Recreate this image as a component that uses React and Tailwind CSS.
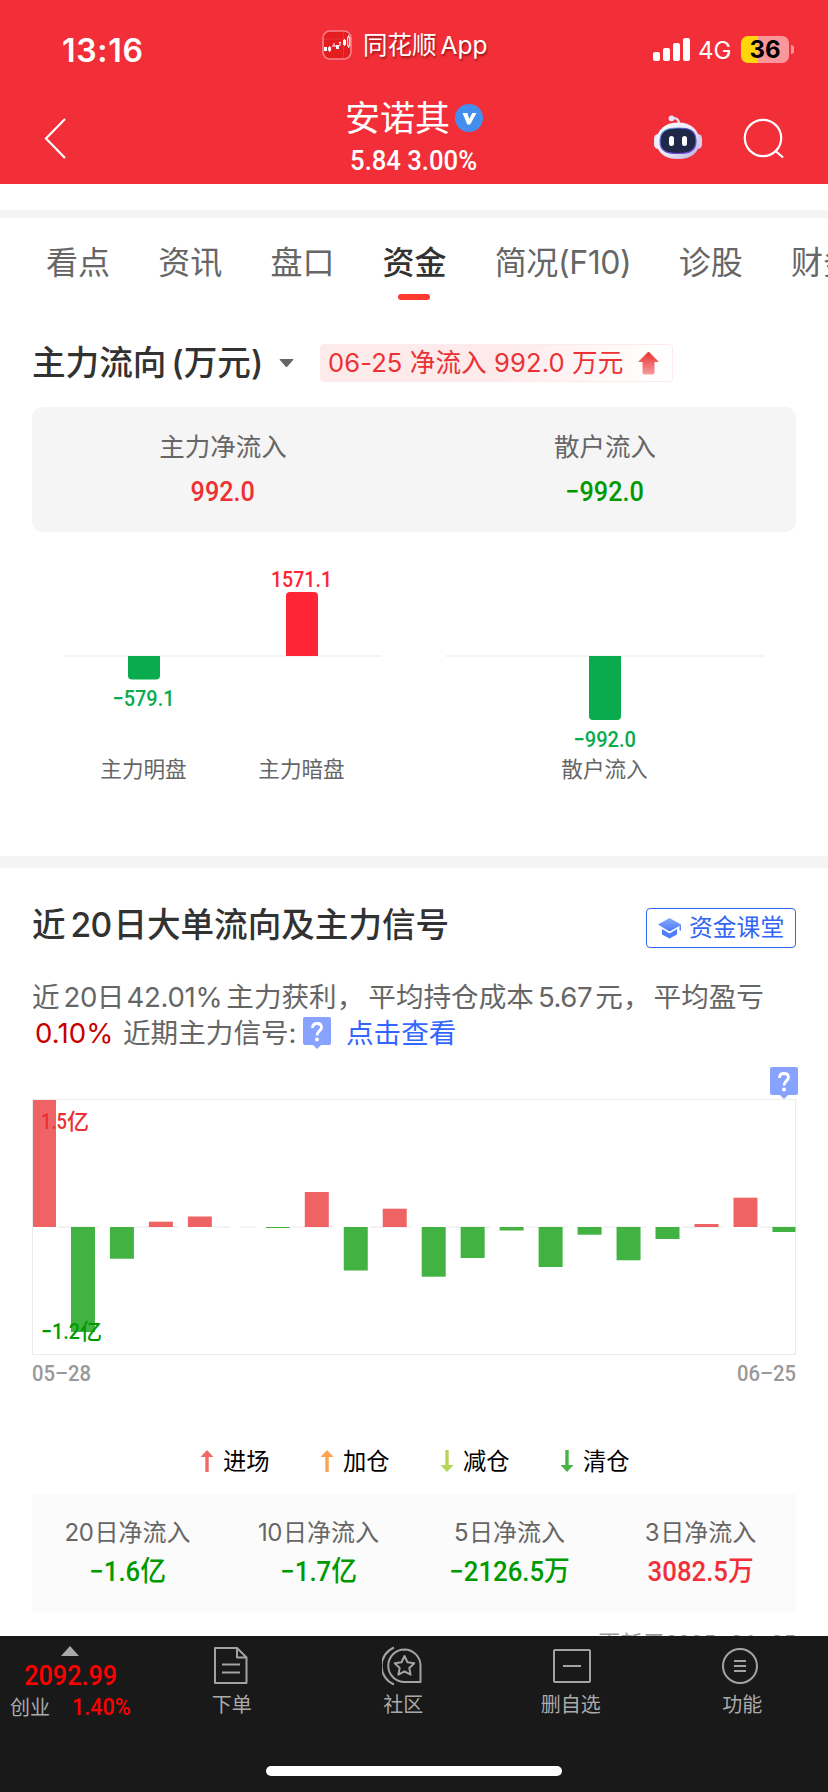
import React from "react";

function StatusBar() {
  return (
    <div className="flex h-[92px] w-full pt-[28px] text-white">
      <div className="w-[322px] pl-[62px] text-[32px] leading-[45px] font-semibold tracking-[0.7px]">13:16</div>
      <div className="flex h-[36px] w-[331px] items-start">
        <svg width="30" height="30" viewBox="0 0 30 30" className="mt-[2px] shrink-0">
          <rect x="1" y="1" width="28" height="28" rx="7" fill="#e41d20" stroke="#f5848a" strokeWidth="1.6" />
          <path d="M2 9H28M21.500 2V28" stroke="#f04a4e" strokeWidth=".5" />
          <path d="M2 17h3v4h-3zM14 15h3v4h-3zM21 10h3v5h-3z" fill="#fff" />
          <path d="M6.600 17.500h2v3h-2zM7.600 16v6M10 16h4M12 13v3M17 12.500h2M18 12v4M22.500 9v7M25.700 7h2v9h-2zM26.700 5v2M26.700 16v2" fill="none" stroke="#fff" strokeWidth="1" />
        </svg>
        <span className="ml-[11px] text-[24.500px] leading-[35px] whitespace-nowrap [text-shadow:1px_2px_2px_rgba(90,0,0,0.55)]">
          同花顺<span className="ml-[4px]">App</span>
        </span>
      </div>
      <svg width="38" height="24" viewBox="0 0 38 24" className="mt-[10px] shrink-0" fill="#fff">
        <rect x="0" y="14" width="7" height="9" rx="2" />
        <rect x="10" y="10" width="7" height="13" rx="2" />
        <rect x="20" y="5" width="7" height="18" rx="2" />
        <rect x="30" y="0" width="7" height="23" rx="2" />
      </svg>
      <div className="ml-[7px] w-[43px] text-[24px] leading-[45px]">4G</div>
      <div className="mt-[8px] flex h-[27px] w-[48px] items-center justify-center rounded-[7px] bg-[linear-gradient(90deg,#ffd60a_35%,#f9979b_35%)] text-[24px] font-bold text-black">
        36
      </div>
      <div className="mt-[17px] ml-[2px] h-[9px] w-[3px] rounded-r-full bg-[#f9979b]" />
    </div>
  );
}

function Robot() {
  return (
    <svg width="48" height="46" viewBox="0 0 48 46">
      <defs>
        <linearGradient id="shell" x1="0" y1="0" x2="1" y2="1">
          <stop offset="0" stopColor="#ffffff" />
          <stop offset=".55" stopColor="#e9e7f8" />
          <stop offset="1" stopColor="#b3aedd" />
        </linearGradient>
        <linearGradient id="rim" x1="0" y1="0" x2="1" y2="1">
          <stop offset="0" stopColor="#6fd6f2" />
          <stop offset=".4" stopColor="#5a49c9" />
          <stop offset="1" stopColor="#7d4be0" />
        </linearGradient>
      </defs>
      <rect x="0" y="19" width="9" height="15" rx="4.500" fill="#e9e9fa" />
      <rect x="39" y="19" width="9" height="15" rx="4.500" fill="#d2cff0" />
      <path d="M17 3.500C22 2.500 25 4 25 9" fill="none" stroke="#dcdcf5" strokeWidth="2.200" />
      <circle cx="17.500" cy="3.300" r="2.900" fill="#e6e6fa" />
      <path d="M24 7.500C37 7.500 45.500 15 45.500 26.500C45.500 38 37 44 24 44S2.500 38 2.500 26.500C2.500 15 11 7.500 24 7.500Z" fill="url(#shell)" />
      <path d="M24 13C34 13 42 14.500 42 26C42 37 34 38.500 24 38.500S6 37 6 26C6 14.500 14 13 24 13Z" fill="#202849" stroke="url(#rim)" strokeWidth="1.200" />
      <rect x="15" y="21" width="5" height="10" rx="2.500" fill="#fff" />
      <rect x="28" y="21" width="5" height="10" rx="2.500" fill="#fff" />
    </svg>
  );
}

function TitleBar() {
  return (
    <div className="flex h-[92px] w-full text-white">
      <div className="w-[214px] pt-[25px] pl-[42px]">
        <svg width="26" height="42" viewBox="0 0 26 42" fill="none" stroke="#fff" strokeWidth="2.200">
          <path d="M23 2L4 21.500L23 41" />
        </svg>
      </div>
      <div className="flex w-[400px] flex-col items-center">
        <div className="mt-[4px] flex h-[44px] items-center">
          <span className="text-[35px] leading-[44px]">安诺其</span>
          <svg width="28" height="28" viewBox="0 0 28 28" className="ml-[5px]">
            <circle cx="14" cy="14" r="14" fill="#448fee" />
            <path d="M7.500 9H12.300L14.300 15L17.300 9H21.500L15.200 20.500H12.300Z" fill="#fff" />
          </svg>
        </div>
        <div className="scale-x-[0.9] font-['Roboto',sans-serif] text-[28.500px] leading-[42px] font-medium whitespace-pre">5.84 3.00%</div>
      </div>
      <div className="pt-[23px] pl-[40px]">
        <Robot />
      </div>
      <div className="pt-[26px] pl-[41px]">
        <svg width="42" height="42" viewBox="0 0 42 42" fill="none" stroke="#fff" strokeWidth="2.200">
          <circle cx="20" cy="20" r="18.200" />
          <path d="M32 32.500L40 39.500" />
        </svg>
      </div>
    </div>
  );
}

const tabs = [
  { name: "看点" },
  { name: "资讯" },
  { name: "盘口" },
  { name: "资金", active: true },
  { name: "简况(F10)", wide: true },
  { name: "诊股" },
  { name: "财务" },
];

function Tabs() {
  return (
    <nav className="flex h-[90px] w-full overflow-hidden pl-[46px] text-[32px] leading-[44px] text-[#666]">
      {tabs.map((t) => (
        <div key={t.name} className={`shrink-0 pt-[23px] whitespace-nowrap ${t.wide ? "w-[184px]" : "w-[112.200px]"}`}>
          <div className={t.active ? "font-medium text-[#323232]" : t.wide ? "tracking-[-0.4px]" : ""}>{t.name}</div>
          {t.active && <div className="mt-[9px] ml-[15px] h-[6px] w-[32px] rounded-full bg-[#ff3a2f]" />}
        </div>
      ))}
    </nav>
  );
}

function FlowHeading() {
  return (
    <div className="flex h-[38px] items-center pl-[32px]">
      <h2 className="w-[247px] text-[33.600px] leading-[44px] font-medium whitespace-nowrap text-[#323232]">
        主力流向<span className="ml-[5px]">(</span>万元)
      </h2>
      <svg width="15" height="9" viewBox="0 0 15 9" className="shrink-0">
        <path d="M1 .500H14L7.500 8Z" fill="#666" stroke="#666" strokeLinejoin="round" />
      </svg>
      <div className="ml-[26px] flex h-[38px] w-[353px] items-center rounded-[4px] border border-[#fdeaec] bg-[linear-gradient(100deg,#fdeaea_50%,#fffafa_85%,#ffffff)] pl-[7px] text-[#eb3134]">
        <span className="text-[25.600px] whitespace-pre tracking-[0.08px]">06-25 净流入 992.0 万元</span>
        <svg width="21" height="24" viewBox="0 0 21 24" className="ml-[15px]">
          <defs>
            <linearGradient id="up" x1="0" y1="0" x2="0" y2="1">
              <stop offset="0" stopColor="#e93030" />
              <stop offset="1" stopColor="#f79a9c" />
            </linearGradient>
          </defs>
          <path d="M10.500 1L20 10.500H16V22Q16 23 15 23H6Q5 23 5 22V10.500H1Z" fill="url(#up)" stroke="url(#up)" strokeLinejoin="round" />
        </svg>
      </div>
    </div>
  );
}

function SummaryCell({ label, value, color }) {
  return (
    <div className="flex w-1/2 flex-col items-center pt-[22px]">
      <div className="text-[25.500px] leading-[36px] text-[#666]">{label}</div>
      <div className={`mt-[9px] scale-x-[0.9] font-['Roboto',sans-serif] text-[28px] leading-[36px] font-medium ${color}`}>{value}</div>
    </div>
  );
}

const cjk = "Inter, 'Noto Sans CJK SC', sans-serif";
const din = "Roboto, 'Noto Sans CJK SC', sans-serif";

function Num({ x, y, w, fill, size = 22.5, children, anchor = "start" }) {
  return (
    <text x={x} y={y} fontFamily={din} fontSize={size} fontWeight="500" fill={fill} textAnchor={anchor} textLength={w} lengthAdjust="spacingAndGlyphs">
      {children}
    </text>
  );
}

function SplitChart() {
  return (
    <svg width="828" height="324" viewBox="0 532 828 324" className="block">
      <path d="M64 656H382M446 656H764" stroke="#f3f3f3" strokeWidth="2" />
      <path d="M128 656H160V675.500Q160 679.500 156 679.500H132Q128 679.500 128 675.500Z" fill="#09ab4c" />
      <path d="M286 656V596Q286 592 290 592H314Q318 592 318 596V656Z" fill="#ff2436" />
      <path d="M589 656H621V716Q621 720 617 720H593Q589 720 589 716Z" fill="#09ab4c" />
      <Num x={271} y={587} w={61} fill="#ff2436">1571.1</Num>
      <Num x={112.500} y={706} w={62} fill="#09ab4c">−579.1</Num>
      <Num x={573.500} y={747} w={62.500} fill="#09ab4c">−992.0</Num>
      <g fontFamily={cjk} fontSize="21.600" fill="#666" textAnchor="middle">
        <text x="143.500" y="777">主力明盘</text>
        <text x="301.500" y="777">主力暗盘</text>
        <text x="604.500" y="777">散户流入</text>
      </g>
    </svg>
  );
}

function Help({ className }) {
  return (
    <svg width="28" height="32" viewBox="0 0 28 32" className={className}>
      <path d="M2 0H26Q28 0 28 2V26Q28 28 26 28H18L14 32L10 28H2Q0 28 0 26V2Q0 0 2 0Z" fill="#88a2ff" />
      <path d="M9.500 11Q9.500 6.500 14 6.500T18.500 10.500C18.500 13.500 14 14 14 18.500" fill="none" stroke="#fff" strokeWidth="2.800" />
      <circle cx="14" cy="22.500" r="2" fill="#fff" />
    </svg>
  );
}

// End position of each bar on the chart's vertical axis; the zero line is at 1227.
const bars = [1100, 1332, 1258.7, 1221.7, 1216.5, 1227, 1228, 1192, 1270.5, 1208.7, 1276.7, 1258, 1230.5, 1267, 1234.7, 1260.3, 1239, 1224, 1197.7, 1232];

function SignalChart() {
  return (
    <svg width="828" height="292" viewBox="0 1099 828 292" className="block">
      <rect x="32.500" y="1099.500" width="763" height="255" fill="none" stroke="#ebebeb" />
      <path d="M58 1227H795" stroke="#f3f3f3" strokeWidth="2" strokeDasharray="42 36" />
      <rect x="230" y="1225" width="10" height="4" fill="#fff" />
      <Num x={41} y={1129} w={26} fill="#eb2f32">1.5</Num>
      <text x="67" y="1129" fontFamily={cjk} fontSize="22" fill="#eb2f32" fontWeight="500">亿</text>
      <Num x={41} y={1339} w={39} fill="#009a00">−1.2</Num>
      <text x="80" y="1339" fontFamily={cjk} fontSize="22" fill="#009a00" fontWeight="500">亿</text>
      {bars.map((end, i) => {
        const left = i === 0 ? 33 : 32 + i * 38.97;
        const width = i === 0 || i === 19 ? 23 : 24;
        return (
          <rect key={i} x={left} y={Math.min(end, 1227)} width={width} height={Math.abs(end - 1227)} fill={end < 1227 ? "#eb2f32" : "#039a03"} opacity=".75" />
        );
      })}
      <Num x={32} y={1381} w={59} fill="#999">05–28</Num>
      <Num x={737} y={1381} w={59} fill="#999">06–25</Num>
    </svg>
  );
}

const legend = [
  { name: "进场", color: "#f16a6a", up: true },
  { name: "加仓", color: "#ffa352", up: true },
  { name: "减仓", color: "#b5d658", up: false },
  { name: "清仓", color: "#48b246", up: false },
];

function Legend() {
  return (
    <div className="flex h-[103px] pt-[52px] pl-[200px]">
      {legend.map((l) => (
        <div key={l.name} className="flex h-[36px] w-[120px] items-center">
          <svg width="14" height="24" viewBox="0 0 14 24" className={l.up ? "" : "rotate-180"}>
            <path d="M7 1L13.500 8H8.700V23H5.300V8H.500Z" fill={l.color} />
          </svg>
          <span className="mt-[2px] ml-[9px] text-[23.300px] leading-[36px] text-black">{l.name}</span>
        </div>
      ))}
    </div>
  );
}

const totals = [
  { n: "20", num: "−1.6", unit: "亿", up: false },
  { n: "10", num: "−1.7", unit: "亿", up: false },
  { n: "5", num: "−2126.5", unit: "万", up: false },
  { n: "3", num: "3082.5", unit: "万", up: true },
];

function Totals() {
  return (
    <div className="mx-[32px] flex h-[118px] bg-[#fbfbfb]">
      {totals.map((t) => (
        <div key={t.n} className="flex w-1/4 flex-col items-center pt-[21px]">
          <div className="text-[24px] leading-[36px] whitespace-nowrap text-[#666]">
            <span className="mr-[1px] tracking-[-0.5px]">{t.n}</span>日净流入
          </div>
          <div className={`mt-[3px] scale-x-[0.92] font-['Roboto','Noto_Sans_CJK_SC',sans-serif] text-[28px] leading-[36px] font-medium whitespace-nowrap ${t.up ? "text-[#f22f38]" : "text-[#009a00]"}`}>
            {t.num}{t.unit}
          </div>
        </div>
      ))}
    </div>
  );
}

function SignalSection() {
  return (
    <section>
      <div className="flex h-[80px] justify-between pt-[40px] pr-[32px] pl-[32px]">
        <h2 className="-mt-[5px] text-[33.600px] leading-[44px] font-medium whitespace-nowrap text-[#323232]">
          近<span className="mr-[2px] ml-[5px] tracking-[-0.8px]">20</span>日大单流向及主力信号
        </h2>
        <div className="flex h-[40px] w-[150px] items-center rounded-[4px] border border-[#3366f6] pl-[11px] text-[#3366f6]">
          <svg width="24" height="22" viewBox="0 0 24 22">
            <defs>
              <linearGradient id="cap" x1="0" y1="0" x2="0" y2="1">
                <stop offset="0" stopColor="#8aacfb" />
                <stop offset="1" stopColor="#4878fa" />
              </linearGradient>
            </defs>
            <path d="M11.500 1L23 7.500V13.500H21.500V9L11.500 14.500L0 7.500Z" fill="url(#cap)" />
            <path d="M4 12L11.500 16.500L19 12V17.500L11.500 21.500L4 17.500Z" fill="#4f7efa" />
          </svg>
          <span className="ml-[7px] text-[23.800px] leading-[36px]">资金课堂</span>
        </div>
      </div>
      <div className="h-[119px] pt-[31px] pl-[32px] text-[27.600px] leading-[36px] whitespace-nowrap text-[#666]">
        <div className="h-[36px]">
          近<span className="mr-[0px] ml-[4px] tracking-[-0.5px]">20</span>日<span className="mr-[4px] ml-[2px] tracking-[-0.3px]">42.01%</span>主力获利<span className="mr-[4px]">，</span>平均持仓成本<span className="mr-[3px] ml-[4px] tracking-[-0.4px]">5.67</span>元<span className="mr-[3px]">，</span>平均盈亏
        </div>
        <div className="flex h-[36px]">
          <span className="ml-[3px] w-[88px] tracking-[0.1px] text-[#c80000]">0.10%</span>
          <span className="w-[180px]">近期主力信号:</span>
          <Help className="mt-[2px]" />
          <span className="ml-[15px] text-[#3366ff]">点击查看</span>
        </div>
      </div>
      <div className="flex h-[32px] justify-end pr-[30px]">
        <Help />
      </div>
      <SignalChart />
      <Legend />
      <Totals />
      <div className="h-[24px] overflow-hidden pt-[17px] pr-[32px] text-right font-['Roboto','Noto_Sans_CJK_SC',sans-serif] text-[22px] leading-[30px] tracking-[0.3px] text-[#999]">
        更新于2025–06–25
      </div>
    </section>
  );
}

function NavItem({ label, width, children }) {
  return (
    <div className={`flex flex-col items-center pt-[10px] text-[20px] leading-[28px] text-[#aaa] ${width}`}>
      <svg width="42" height="40" viewBox="0 0 42 40" fill="none" stroke="#a3a3a3" strokeWidth="2" strokeLinejoin="round">
        {children}
      </svg>
      <span className="mt-[5px]">{label}</span>
    </div>
  );
}

function Footer() {
  return (
    <footer className="flex h-[156px] flex-col items-center bg-[#191919]">
      <div className="flex h-[130px] w-full">
        <div className="w-[142px] shrink-0">
          <svg width="18" height="10" viewBox="0 0 18 10" className="mt-[10px] ml-[61px] block">
            <path d="M9 0L18 10H0Z" fill="#aaa" />
          </svg>
          <div className="flex h-[40px] items-center justify-center">
            <span className="scale-x-[0.9] font-['Roboto',sans-serif] text-[28px] font-medium text-[#ff0000]">2092.99</span>
          </div>
          <div className="flex h-[22px] items-center pl-[10px]">
            <span className="mt-[2px] text-[20px] text-[#aaa]">创业</span>
            <span className="ml-[22px] origin-left scale-x-[0.9] font-['Roboto',sans-serif] text-[24px] font-medium text-[#ff0000]">1.40%</span>
          </div>
        </div>
        <NavItem label="下单" width="w-[180px]">
          <path d="M5 2.500H27L36.500 12V37.500H5ZM27 2.500V12H36.500M12 19H30M12 27H30" transform="translate(-1 -.500)" />
        </NavItem>
        <NavItem label="社区" width="w-[164px]">
          <path d="M22.500 3.500A16.200 16.200 0 0 0 22.500 36H38.500V20A16.200 16.200 0 0 0 22.500 3.500ZM12 1.500A20 20 0 0 0 12 38.500" />
          <path d="M22.500 10L25.500 16.300L32.300 17.200L27.300 21.900L28.600 28.700L22.500 25.400L16.400 28.700L17.700 21.900L12.700 17.200L19.500 16.300Z" />
        </NavItem>
        <NavItem label="删自选" width="w-[172px]">
          <rect x="4" y="4" width="36" height="32" rx="1" />
          <path d="M13 20H31" />
        </NavItem>
        <NavItem label="功能" width="w-[172px]">
          <circle cx="19" cy="20" r="17" />
          <path d="M13 15H25M13 20H25M13 25H25" />
        </NavItem>
      </div>
      <div className="h-[10px] w-[296px] rounded-full bg-white" />
    </footer>
  );
}

export default function App() {
  return (
    <div lang="zh-CN" className="h-[1792px] w-[828px] overflow-hidden bg-white font-['Inter','Noto_Sans_CJK_SC',sans-serif]">
      <header className="h-[184px] bg-[#f22f38]">
        <StatusBar />
        <TitleBar />
      </header>
      <div className="h-[26px]" />
      <div className="h-[8px] bg-[#f4f4f4]" />
      <Tabs />
      <div className="h-[36px]" />
      <FlowHeading />
      <div className="mx-[32px] mt-[25px] flex h-[125px] rounded-[11px] bg-[#f5f5f5]">
        <SummaryCell label="主力净流入" value="992.0" color="text-[#eb3134]" />
        <SummaryCell label="散户流入" value="−992.0" color="text-[#009a00]" />
      </div>
      <SplitChart />
      <div className="h-[12px] bg-[#f4f4f4]" />
      <SignalSection />
      <Footer />
    </div>
  );
}
